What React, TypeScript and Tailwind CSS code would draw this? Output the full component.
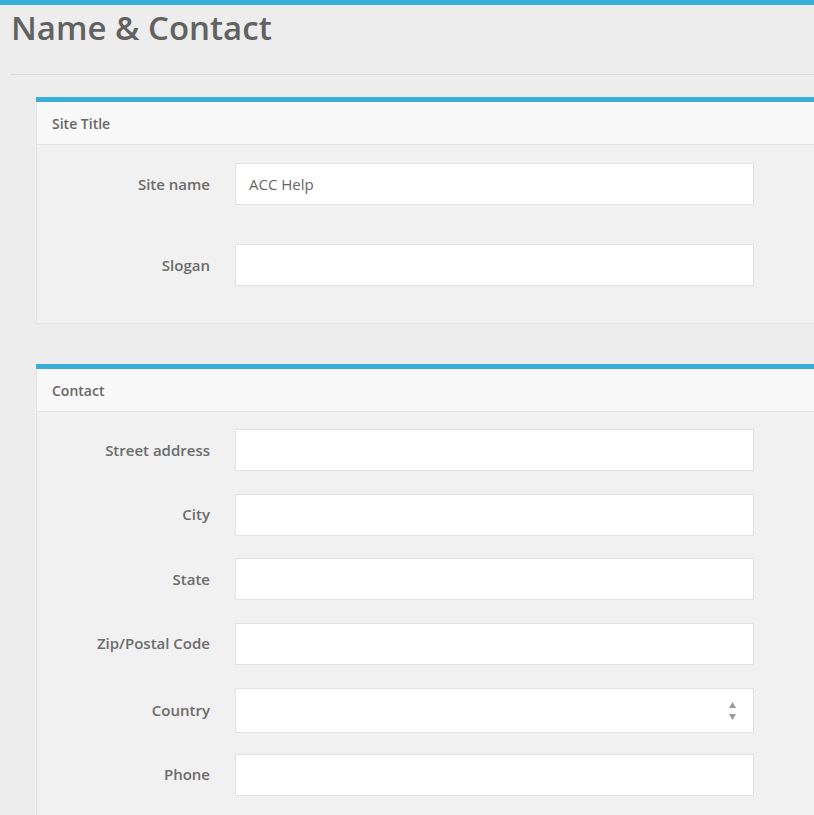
import React from 'react';

const Field: React.FC<{ label: string; value?: string; select?: boolean; className?: string }> = ({
  label,
  value,
  select,
  className,
}) => {
  return (
    <div className={`flex items-center ${className ?? ''}`}>
      <label className="w-[173px] shrink-0 text-right text-[15px] font-semibold text-[#6b6b6b]">{label}</label>
      <div
        className={`ml-[25px] flex w-[519px] items-center justify-between border border-[#e2e2e2] bg-white pl-[13px] pr-[17px] text-[15px] text-[#666] ${
          select ? 'h-[45px]' : 'h-[42px]'
        }`}
      >
        <span>{value}</span>
        {select && (
          <span className="flex flex-col items-center gap-[6px]">
            <svg width="7" height="6" viewBox="0 0 7 6">
              <path d="M3.5 0 L7 6 L0 6 Z" fill="#9a9a9a" />
            </svg>
            <svg width="7" height="6" viewBox="0 0 7 6">
              <path d="M0 0 L7 0 L3.5 6 Z" fill="#9a9a9a" />
            </svg>
          </span>
        )}
      </div>
    </div>
  );
};

const Card: React.FC<{ title: string; className?: string; children: React.ReactNode }> = ({ title, className, children }) => {
  return (
    <div className={`border-t-[5px] border-[#3aaedb] ${className ?? ''}`}>
      <div className="flex h-[43px] items-center border-b border-l border-[#e4e4e4] bg-[#f9f9f9] pl-[15px] text-[14px] font-semibold text-[#666]">
        {title}
      </div>
      <div className="border-b border-l border-[#e4e4e4] bg-[#f1f1f1]">{children}</div>
    </div>
  );
};

export default function App() {
  return (
    <div className="min-h-screen overflow-hidden bg-[#ededed] font-['Open_Sans',sans-serif]">
      <div className="h-[5px] bg-[#3aaedb]" />

      {/* page title */}
      <h1 className="pl-[11px] pt-[3px] text-[33px] font-semibold leading-[40px] text-[#626262]">Name &amp; Contact</h1>
      <div className="ml-[10px] mt-[26px] border-t border-[#dcdcdc]" />

      <div className="w-[900px] pl-[36px] pt-[22px]">
        <Card title="Site Title">
          <div className="flex flex-col gap-[39px] pb-[37px] pt-[18px]">
            <Field label="Site name" value="ACC Help" />
            <Field label="Slogan" />
          </div>
        </Card>

        <Card title="Contact" className="mt-[40px]">
          <div className="flex flex-col gap-[22.5px] pb-[30px] pt-[17px]">
            <Field label="Street address" />
            <Field label="City" />
            <Field label="State" />
            <Field label="Zip/Postal Code" />
            <Field label="Country" select className="-mb-[2px] mt-[1px]" />
            <Field label="Phone" />
          </div>
        </Card>
      </div>
    </div>
  );
}
